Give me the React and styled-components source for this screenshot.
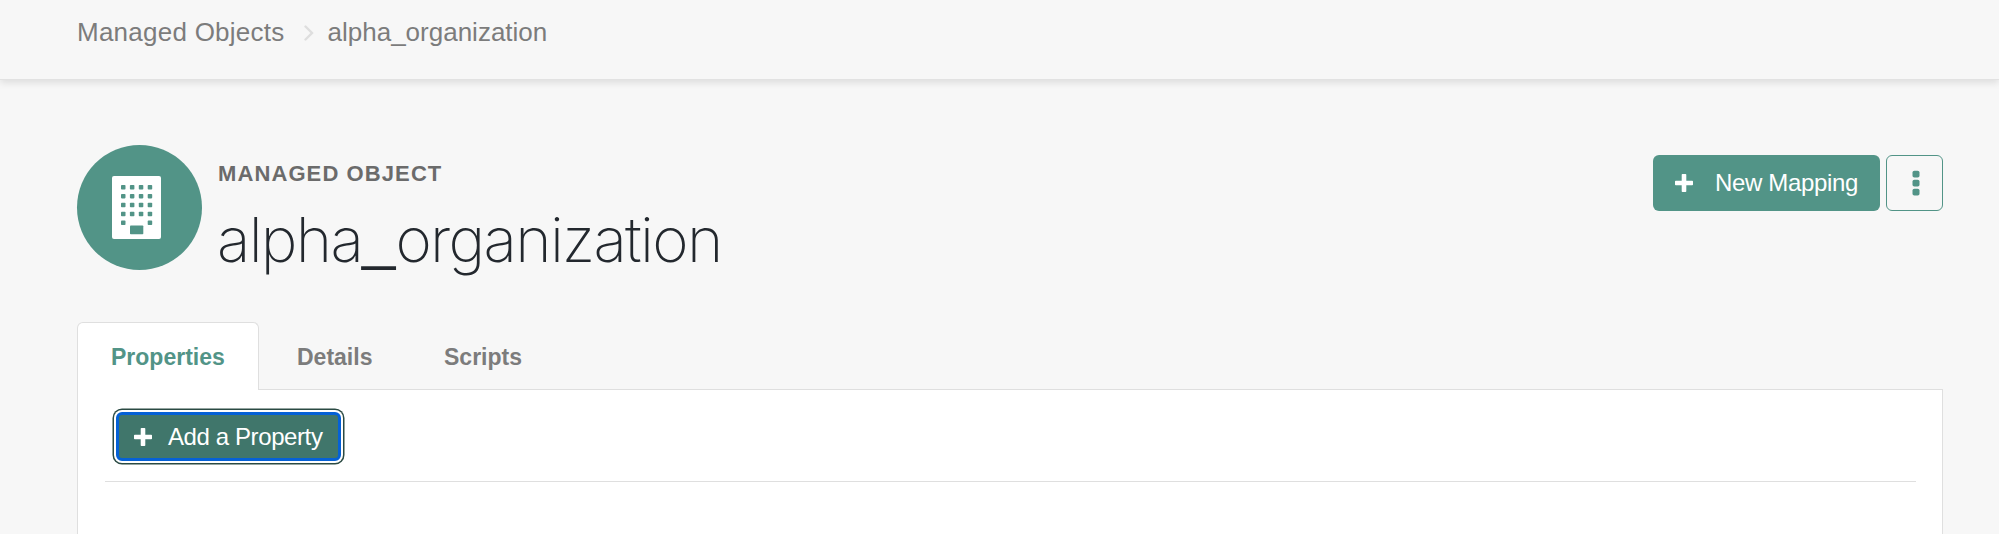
import React from "react";
import styled, { createGlobalStyle } from "styled-components";

const GlobalStyle = createGlobalStyle`
  * { box-sizing: border-box; }
  body {
    margin: 0;
    background: #f7f7f7;
    font-family: "Liberation Sans", Arial, sans-serif;
  }
`;

const Page = styled.div`
  height: 534px;
  overflow: hidden;
  display: flex;
  flex-direction: column;
`;

const TopBar = styled.nav`
  flex: none;
  height: 80px;
  padding: 17px 0 0 77px;
  display: flex;
  align-items: flex-start;
  border-bottom: 1px solid #e2e2e2;
  box-shadow: 0 3px 7px rgba(0, 0, 0, 0.1);
`;

const Crumb = styled.span`
  font-size: 26px;
  line-height: 30px;
  color: #7c7c7c;
  letter-spacing: ${(p) => p.$spacing};
`;

const CrumbArrow = styled.svg`
  width: 10px;
  height: 16px;
  margin: 8px 14px 0 19px;
`;

const Header = styled.header`
  flex: none;
  display: flex;
  align-items: flex-start;
  padding: 65px 56px 0 77px;
  height: 242px;
`;

const Avatar = styled.div`
  width: 125px;
  height: 125px;
  border-radius: 50%;
  background: #529487;
  display: flex;
  align-items: center;
  justify-content: center;
  padding-right: 6px;
`;

const Heading = styled.div`
  flex: 1;
  padding: 16px 0 0 16px;
`;

const Kind = styled.div`
  font-size: 22px;
  line-height: 26px;
  font-weight: 700;
  letter-spacing: 1.1px;
  color: #6b6b6b;
  text-transform: uppercase;
`;

const Title = styled.h1`
  margin: 15px 0 0 -1px;
  font-family: Inter, "Liberation Sans", sans-serif;
  font-weight: 200;
  font-size: 62px;
  line-height: 76px;
  letter-spacing: -1.7px;
  color: #23282e;
  white-space: nowrap;
`;

const Underscore = styled.span`
  font-family: "Liberation Sans", Arial, sans-serif;
  font-size: 60px;
  font-weight: 400;
  line-height: 0;
  letter-spacing: 0;
  vertical-align: 4px;
`;

const Actions = styled.div`
  display: flex;
  gap: 6px;
  padding-top: 10px;
`;

const Button = styled.button`
  display: flex;
  align-items: center;
  border: 0;
  padding: 0 0 0 ${(p) => p.$pad}px;
  gap: ${(p) => p.$gap}px;
  width: ${(p) => p.$width}px;
  height: ${(p) => p.$height}px;
  border-radius: 6px;
  background: ${(p) => p.$bg};
  color: #fff;
  font: 24px "Liberation Sans", Arial, sans-serif;
  letter-spacing: ${(p) => p.$spacing}px;
  white-space: nowrap;
`;

const FocusedButton = styled(Button)`
  border: 3px solid #0561d6;
  box-shadow: 0 0 0 2px #fff, 0 0 0 3.5px #2b4a43;
`;

const MenuButton = styled.button`
  width: 57px;
  height: 56px;
  padding: 0 0 0 2px;
  border: 1.5px solid #529487;
  border-radius: 6px;
  background: transparent;
  display: flex;
  align-items: center;
  justify-content: center;
`;

const Tabs = styled.div`
  flex: none;
  position: relative;
  z-index: 1;
  display: flex;
  margin: 0 0 -1px 77px;
`;

const Tab = styled.div`
  height: 68px;
  width: ${(p) => p.$width}px;
  padding: 20px 0 0 ${(p) => p.$pad}px;
  font-size: 23px;
  line-height: 28px;
  font-weight: 700;
  color: ${(p) => (p.$active ? "#529487" : "#7c7c7c")};
  background: ${(p) => (p.$active ? "#fff" : "transparent")};
  border: 1px solid ${(p) => (p.$active ? "#dfdfdf" : "transparent")};
  border-bottom: 0;
  border-radius: 6px 6px 0 0;
`;

const Panel = styled.main`
  flex: 1;
  margin: 0 56px 0 77px;
  background: #fff;
  border: 1px solid #dfdfdf;
  border-bottom: 0;
`;

const Toolbar = styled.div`
  margin: 0 26px 0 27px;
  height: 92px;
  padding: 22px 0 0 11px;
  border-bottom: 1px solid #dfdfdf;
`;

const PlusIcon = styled.svg`
  flex: none;
  width: 18px;
  height: 20px;
`;

const Plus = () => (
  <PlusIcon viewBox="0 0 18 20">
    <path
      d="M7.5 1.8H10.5V8.5H17.2V11.5H10.5V18.2H7.5V11.5H0.8V8.5H7.5Z"
      fill="#fff"
      stroke="#fff"
      strokeWidth="1.6"
      strokeLinejoin="round"
    />
  </PlusIcon>
);

const Building = () => (
  <svg width="49" height="63" viewBox="0 0 49 63">
    <rect width="49" height="63" rx="2" fill="#fff" />
    {[0, 1, 2, 3, 4].map((row) =>
      [0, 1, 2, 3]
        .filter((col) => row < 4 || col === 0 || col === 3)
        .map((col) => (
          <rect
            key={`${row}-${col}`}
            x={9 + col * 8.9}
            y={9 + row * 8.9}
            width="4.5"
            height="4.5"
            rx="0.8"
            fill="#529487"
          />
        ))
    )}
    <rect x="18" y="49.5" width="13.3" height="8.8" rx="0.8" fill="#529487" />
  </svg>
);

export default function App() {
  return (
    <Page>
      <GlobalStyle />
      <TopBar>
        <Crumb $spacing="0.25px">Managed Objects</Crumb>
        <CrumbArrow viewBox="0 0 10 16" fill="none">
          <path d="M1.5 1.5L8 8L1.5 14.5" stroke="#dedede" strokeWidth="2.4" strokeLinecap="round" />
        </CrumbArrow>
        <Crumb $spacing="0px">alpha_organization</Crumb>
      </TopBar>
      <Header>
        <Avatar>
          <Building />
        </Avatar>
        <Heading>
          <Kind>Managed Object</Kind>
          <Title>
            alpha<Underscore>_</Underscore>organization
          </Title>
        </Heading>
        <Actions>
          <Button $width={227} $height={56} $pad={22} $gap={22} $bg="#529487" $spacing={-0.35}>
            <Plus />
            New Mapping
          </Button>
          <MenuButton aria-label="More actions">
            <svg width="8" height="26" viewBox="0 0 8 26">
              {[0, 9, 18].map((y) => (
                <rect key={y} x="0.5" y={y + 0.7} width="7" height="6.8" rx="1.8" fill="#529487" />
              ))}
            </svg>
          </MenuButton>
        </Actions>
      </Header>
      <Tabs>
        <Tab $active $width={182} $pad={33}>Properties</Tab>
        <Tab $width={147} $pad={37}>Details</Tab>
        <Tab $width={147} $pad={37}>Scripts</Tab>
      </Tabs>
      <Panel>
        <Toolbar>
          <FocusedButton $width={225} $height={49} $pad={15} $gap={16} $bg="#40766b" $spacing={-0.4}>
            <Plus />
            Add a Property
          </FocusedButton>
        </Toolbar>
      </Panel>
    </Page>
  );
}
